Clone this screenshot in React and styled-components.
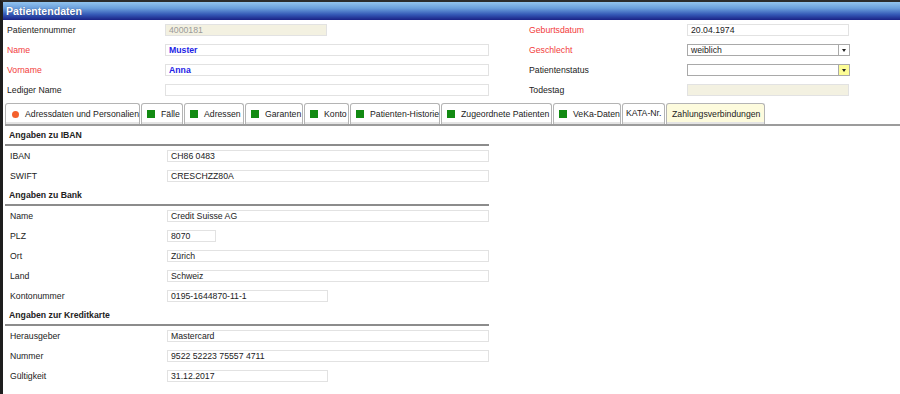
import React from "react";
import styled, { createGlobalStyle } from "styled-components";

const GlobalStyle = createGlobalStyle`
  html, body {
    margin: 0;
    padding: 0;
    background: #ffffff;
  }
  body {
    font-family: "Liberation Sans", Arial, sans-serif;
    font-size: 8.7px;
    color: #222;
  }
`;

const Frame = styled.div`
  box-sizing: border-box;
  height: 394px;
  border-left: 3px solid #1e1e1e;
  border-top: 2px solid #2c2c2c;
  background: #fff;
  overflow: hidden;
`;

const TitleBar = styled.div`
  height: 18px;
  line-height: 18px;
  padding-left: 3px;
  font-size: 10.6px;
  font-weight: bold;
  color: #fff;
  text-shadow: 0 0 1px rgba(0, 0, 40, 0.5);
  background: linear-gradient(#92c4ee 0%, #6a9fdc 35%, #3458b6 70%, #1a2286 100%);
`;

const TopForm = styled.div`
  display: flex;
`;

const Column = styled.div`
  display: flex;
  flex-direction: column;
  margin-left: ${(p) => p.offset ?? 0}px;
`;

const Row = styled.div`
  display: flex;
  align-items: center;
  height: 20px;
`;

const Label = styled.div`
  box-sizing: border-box;
  flex: none;
  width: ${(p) => p.width}px;
  padding-left: ${(p) => p.pad ?? 4}px;
  color: ${(p) => (p.required ? "#f23b3b" : "#222")};
  white-space: nowrap;
`;

const Input = styled.div`
  box-sizing: border-box;
  flex: none;
  width: ${(p) => p.width}px;
  height: 12px;
  line-height: 10px;
  padding-left: 3px;
  border: 1px solid #e2e2e2;
  background: ${(p) => (p.disabled ? "#f3f1e1" : "#fff")};
  color: ${(p) => (p.emph ? "#2323e6" : p.disabled ? "#9a9a9a" : "#222")};
  font-weight: ${(p) => (p.emph ? "bold" : "normal")};
  white-space: nowrap;
  overflow: hidden;
`;

const Select = styled.div`
  box-sizing: border-box;
  flex: none;
  width: ${(p) => p.width}px;
  height: 12px;
  display: flex;
  border: 1px solid #a9a9a9;
  background: #fff;
`;

const SelectValue = styled.div`
  flex: 1;
  line-height: 10px;
  padding-left: 3px;
  white-space: nowrap;
`;

const ArrowBox = styled.div`
  width: 10px;
  border-left: 1px solid #a9a9a9;
  background: ${(p) => p.bg || "#fff"};
  display: flex;
  align-items: center;
  justify-content: center;
  &::after {
    content: "";
    border-left: 2.5px solid transparent;
    border-right: 2.5px solid transparent;
    border-top: 3px solid #222;
  }
`;

const TabBar = styled.div`
  display: flex;
  align-items: flex-end;
  gap: 1px;
  margin: 3px 0 0 2px;
  height: 21px;
  border-bottom: 2px solid #9c9c9c;
`;

const Tab = styled.div`
  box-sizing: border-box;
  flex: none;
  width: ${(p) => p.w}px;
  height: 21px;
  display: flex;
  align-items: center;
  gap: 6px;
  padding-left: ${(p) => (p.plain ? 3 : 5)}px;
  border: 1px solid #b4b4b4;
  border-bottom: none;
  border-radius: 3px 3px 0 0;
  background: ${(p) => (p.active ? "#fdfbdd" : "#fff")};
  box-shadow: inset 0 -2px 0 #e4e4e4;
  white-space: nowrap;
  span {
    margin-top: ${(p) => (p.plain ? -3 : 0)}px;
  }
`;

const Square = styled.i`
  width: 8px;
  height: 8px;
  background: #128a12;
  flex: none;
`;

const Dot = styled.i`
  width: 7px;
  height: 7px;
  margin-left: 1px;
  border-radius: 50%;
  background: #f4602c;
  flex: none;
`;

const Content = styled.div`
  padding-left: 2px;
`;

const SectionTitle = styled.div`
  box-sizing: border-box;
  width: 484px;
  height: 20px;
  line-height: 19px;
  padding-left: 4px;
  font-weight: bold;
  border-bottom: 2px solid #8c8c8c;
`;

const topLeft = [
  { label: "Patientennummer", value: "4000181", width: 162, disabled: true },
  { label: "Name", value: "Muster", required: true, emph: true },
  { label: "Vorname", value: "Anna", required: true, emph: true },
  { label: "Lediger Name", value: "" },
];

const tabs = [
  { text: "Adressdaten und Personalien", w: 135, icon: "dot" },
  { text: "Fälle", w: 42, icon: "sq" },
  { text: "Adressen", w: 60, icon: "sq" },
  { text: "Garanten", w: 58, icon: "sq" },
  { text: "Konto", w: 45, icon: "sq" },
  { text: "Patienten-Historie", w: 90, icon: "sq" },
  { text: "Zugeordnete Patienten", w: 111, icon: "sq" },
  { text: "VeKa-Daten", w: 68, icon: "sq" },
  { text: "KATA-Nr.", w: 43 },
  { text: "Zahlungsverbindungen", w: 99, active: true },
];

const sections = [
  {
    title: "Angaben zu IBAN",
    rows: [
      ["IBAN", "CH86 0483", 322],
      ["SWIFT", "CRESCHZZ80A", 322],
    ],
  },
  {
    title: "Angaben zu Bank",
    rows: [
      ["Name", "Credit Suisse AG", 322],
      ["PLZ", "8070", 49],
      ["Ort", "Zürich", 322],
      ["Land", "Schweiz", 322],
      ["Kontonummer", "0195-1644870-11-1", 161],
    ],
  },
  {
    title: "Angaben zur Kreditkarte",
    rows: [
      ["Herausgeber", "Mastercard", 322],
      ["Nummer", "9522 52223 75557 4711", 322],
      ["Gültigkeit", "31.12.2017", 161],
    ],
  },
];

export default function App() {
  return (
    <>
      <GlobalStyle />
      <Frame>
        <TitleBar>Patientendaten</TitleBar>

        <TopForm>
          <Column>
            {topLeft.map((f) => (
              <Row key={f.label}>
                <Label width={162} required={f.required}>
                  {f.label}
                </Label>
                <Input
                  width={f.width || 324}
                  disabled={f.disabled}
                  emph={f.emph}
                >
                  {f.value}
                </Input>
              </Row>
            ))}
          </Column>
          <Column offset={40}>
            <Row>
              <Label width={158} pad={0} required>
                Geburtsdatum
              </Label>
              <Input width={162}>20.04.1974</Input>
            </Row>
            <Row>
              <Label width={158} pad={0} required>
                Geschlecht
              </Label>
              <Select width={163}>
                <SelectValue>weiblich</SelectValue>
                <ArrowBox />
              </Select>
            </Row>
            <Row>
              <Label width={158} pad={0}>
                Patientenstatus
              </Label>
              <Select width={163}>
                <SelectValue />
                <ArrowBox bg="#fdfd96" />
              </Select>
            </Row>
            <Row>
              <Label width={158} pad={0}>
                Todestag
              </Label>
              <Input width={162} disabled />
            </Row>
          </Column>
        </TopForm>

        <TabBar>
          {tabs.map((t) => (
            <Tab key={t.text} w={t.w} active={t.active} plain={!t.icon && !t.active}>
              {t.icon === "dot" && <Dot />}
              {t.icon === "sq" && <Square />}
              <span>{t.text}</span>
            </Tab>
          ))}
        </TabBar>

        <Content>
          {sections.map((s) => (
            <div key={s.title}>
              <SectionTitle>{s.title}</SectionTitle>
              {s.rows.map(([label, value, w]) => (
                <Row key={label}>
                  <Label width={162} pad={5}>
                    {label}
                  </Label>
                  <Input width={w}>{value}</Input>
                </Row>
              ))}
            </div>
          ))}
        </Content>
      </Frame>
    </>
  );
}
